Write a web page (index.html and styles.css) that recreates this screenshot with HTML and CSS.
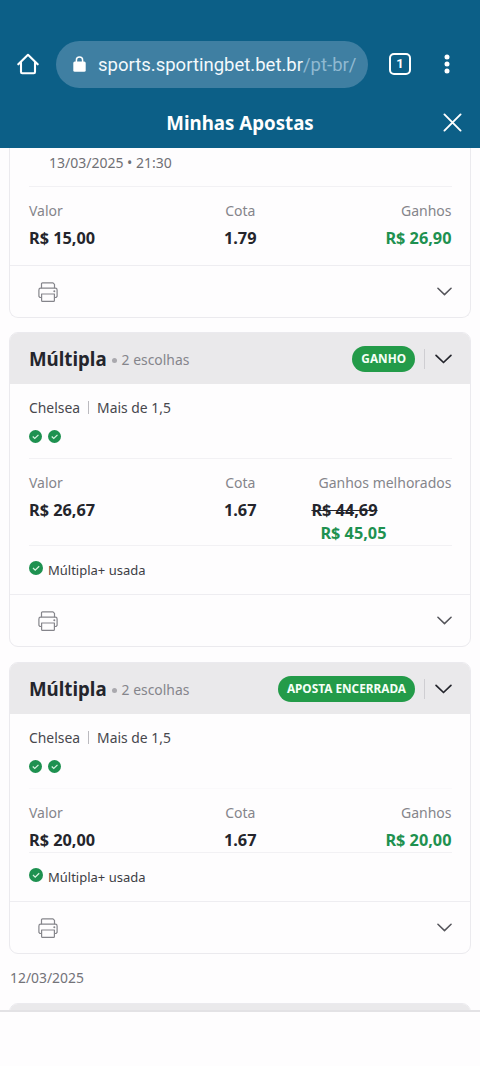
FILE: index.html
```html
<!DOCTYPE html>
<html lang="pt-BR">
<head>
<meta charset="utf-8">
<title>Minhas Apostas</title>
<link rel="stylesheet" href="styles.css">
</head>
<body>
<svg class="defs" width="0" height="0">
  <symbol id="printer" viewBox="0 0 20 20">
    <g fill="none" stroke="currentColor" stroke-width="1.2" stroke-linejoin="round">
      <path d="M3.5 6.2V1.8Q3.5.8 4.5.8H15l1.500 1.500V6.200"/>
      <path d="M3.600 15.500H2L.9 14.300V8Q.9 6.200 2.700 6.200H17.300Q19.100 6.200 19.100 8v6.300L18 15.500H16.400"/>
      <path d="M3.600 12H16.400V18.400Q16.400 19.300 15.500 19.300H4.500Q3.600 19.300 3.600 18.400Z"/>
    </g>
    <circle cx="16.300" cy="9.200" r="1" fill="currentColor"/>
  </symbol>
  <symbol id="chevron" viewBox="0 0 16 9">
    <path d="M1 1l7 6.800L15 1" fill="none" stroke="currentColor" stroke-width="1.600" stroke-linecap="round" stroke-linejoin="round"/>
  </symbol>
  <symbol id="check" viewBox="0 0 14 14">
    <circle cx="7" cy="7" r="7" fill="#1e9150"/>
    <path d="M4 7l2.200 2.100L10.200 5.200" fill="none" stroke="#d9f2e0" stroke-width="1.300"/>
  </symbol>
</svg>
<div class="screen">
  <div class="browser">
    <svg class="home" viewBox="0 0 22 22"><path d="M1.300 11.300L11 1.800l9.700 9.500M4 9.500V19Q4 20.200 5.200 20.200H16.800Q18 20.200 18 19V9.500" fill="none" stroke="#fff" stroke-width="2.100" stroke-linecap="round" stroke-linejoin="round"/></svg>
    <div class="address">
      <svg class="lock" viewBox="0 0 13 16"><rect x=".3" y="5.500" width="12.400" height="10.300" rx="1.500" fill="#fff"/><path d="M3.400 6V4Q3.400 1 6.500 1T9.600 4V6" fill="none" stroke="#fff" stroke-width="1.500"/></svg>
      <span class="url">sports.sportingbet.bet.br<span class="path">/pt-br/</span></span>
    </div>
    <div class="tabs">1</div>
    <svg class="more" viewBox="0 0 6 20"><g fill="#fff"><circle cx="3" cy="3" r="2.500"/><circle cx="3" cy="10" r="2.500"/><circle cx="3" cy="17" r="2.500"/></g></svg>
  </div>
  <header class="title-bar">
    <h1>Minhas Apostas</h1>
    <svg class="close" viewBox="0 0 20 20"><path d="M1.500 1.500l17 17M18.500 1.500l-17 17" stroke="#fff" stroke-width="2" stroke-linecap="round"/></svg>
  </header>
  <main class="list">
    <section class="card card-cut">
      <div class="event-date">13/03/2025 • 21:30</div>
      <div class="stats stats-roomy">
        <div class="stat"><span class="label">Valor</span><b>R$ 15,00</b></div>
        <div class="stat mid"><span class="label">Cota</span><b>1.79</b></div>
        <div class="stat end"><span class="label">Ganhos</span><b class="win">R$ 26,90</b></div>
      </div>
      <div class="foot"><svg class="printer"><use href="#printer"/></svg><svg class="chev"><use href="#chevron"/></svg></div>
    </section>

    <section class="card card-spaced">
      <div class="head">
        <h2>Múltipla</h2><i class="dot"></i><span class="count">2 escolhas</span>
        <span class="badge">GANHO</span><i class="bar"></i><svg class="chev dark"><use href="#chevron"/></svg>
      </div>
      <div class="picks">
        <div class="names">Chelsea<i class="sep"></i>Mais de 1,5</div>
        <div class="checks"><svg><use href="#check"/></svg><svg><use href="#check"/></svg></div>
      </div>
      <div class="stats">
        <div class="stat"><span class="label">Valor</span><b>R$ 26,67</b></div>
        <div class="stat mid"><span class="label">Cota</span><b>1.67</b></div>
        <div class="stat end"><span class="label">Ganhos melhorados</span><div class="boost"><b class="old">R$ 44,69</b><b class="win">R$ 45,05</b></div></div>
      </div>
      <div class="used"><svg><use href="#check"/></svg>Múltipla+ usada</div>
      <div class="foot"><svg class="printer"><use href="#printer"/></svg><svg class="chev"><use href="#chevron"/></svg></div>
    </section>

    <section class="card">
      <div class="head">
        <h2>Múltipla</h2><i class="dot"></i><span class="count">2 escolhas</span>
        <span class="badge">APOSTA ENCERRADA</span><i class="bar"></i><svg class="chev dark"><use href="#chevron"/></svg>
      </div>
      <div class="picks">
        <div class="names">Chelsea<i class="sep"></i>Mais de 1,5</div>
        <div class="checks"><svg><use href="#check"/></svg><svg><use href="#check"/></svg></div>
      </div>
      <div class="stats stats-faint">
        <div class="stat"><span class="label">Valor</span><b>R$ 20,00</b></div>
        <div class="stat mid"><span class="label">Cota</span><b>1.67</b></div>
        <div class="stat end"><span class="label">Ganhos</span><b class="win">R$ 20,00</b></div>
      </div>
      <div class="used"><svg><use href="#check"/></svg>Múltipla+ usada</div>
      <div class="foot"><svg class="printer"><use href="#printer"/></svg><svg class="chev"><use href="#chevron"/></svg></div>
    </section>

    <div class="day">12/03/2025</div>
    <section class="card card-next"><div class="head"></div></section>
  </main>
  <footer class="bottom"></footer>
</div>
</body>
</html>
```
FILE: styles.css
```css
* { box-sizing: border-box; }
body { margin: 0; background: #fefdfe; }
.defs { position: absolute; }
.screen {
  width: 480px; height: 1066px; overflow: hidden;
  display: flex; flex-direction: column;
  font-family: "Noto Sans", sans-serif; color: #24252c;
}
svg { display: block; flex: none; }

/* Browser toolbar */
.browser {
  height: 98px; flex: none; background: #0c5f87;
  display: flex; align-items: center; padding: 30px 0 0 17px;
}
.home { width: 22px; height: 22px; }
.address {
  width: 312px; height: 47px; margin-left: 17px; padding-left: 17px;
  border-radius: 24px; background: #3f7fa2;
  display: flex; align-items: center;
}
.lock { width: 13px; height: 16px; }
.url {
  margin: 2px 0 0 12px; font: 18.5px/24px Roboto, sans-serif;
  color: #f3f9fc; white-space: nowrap;
}
.path { color: #8fb9d1; }
.tabs {
  width: 22px; height: 22px; margin-left: 21px;
  border: 2px solid #fff; border-radius: 5px;
  font: 700 13px/18px Roboto, sans-serif; color: #fff; text-align: center;
}
.more { width: 6px; height: 20px; margin-left: 33px; }

.title-bar {
  height: 50px; flex: none; background: #0c5f87; color: #fff;
  display: flex; align-items: center; justify-content: flex-end;
  padding: 0 18px 1px 0;
}
.title-bar h1 { flex: 1; margin: 0 0 0 37px; text-align: center; font-size: 18.700px; line-height: 26px; }
.close { width: 19px; height: 19px; }

/* Bet cards */
.list { height: 864px; flex: none; overflow: hidden; padding: 0 9px; border-bottom: 2px solid #e3e2e5; }
.card {
  margin-bottom: 14px; border: 1px solid #ebeaee; border-radius: 9px;
  overflow: hidden; background: #fefdfe;
}
.card-cut { border-top: 0; border-radius: 0 0 9px 9px; }
.card-spaced { margin-bottom: 15px; }
.event-date {
  height: 38px; padding: 3px 0 0 39px;
  font-size: 14px; line-height: 24px; color: #707075;
}
.head {
  height: 51px; padding: 0 18px 0 19px; background: #eae9eb;
  display: flex; align-items: center;
}
.head h2 { margin: 0; font-size: 18.700px; line-height: 26px; }
.dot { width: 5px; height: 5px; margin: 4px 5px 0 5px; border-radius: 50%; background: #aaa9ae; }
.count { margin: 3px auto 0 0; font-size: 13.900px; line-height: 20px; color: #85858b; }
.badge {
  height: 26px; padding: 0 9px; border-radius: 13px; background: #239b49;
  color: #f5fff7; font-size: 11.800px; font-weight: 700; line-height: 25px;
}
.bar { width: 1px; height: 20px; margin: 0 10px 0 9px; background: #cfced2; }
.chev { width: 15px; height: 9px; color: #55555b; }
.chev.dark { width: 17px; height: 10px; color: #24252c; }

.picks { height: 74px; padding: 11px 19px 0; }
.names { display: flex; align-items: center; height: 24px; font-size: 13.900px; color: #47474d; }
.sep { width: 1px; height: 13px; margin: 0 8px; background: #bbbabf; }
.checks { display: flex; gap: 6px; margin-top: 11px; }
.checks svg { width: 13px; height: 13px; }

.stats {
  display: grid; grid-template-columns: 1fr 64px 1fr;
  margin: 0 18.500px 0 19px; padding-top: 12px;
  border-top: 1px solid #f2f1f4;
}
.stats-roomy { padding-bottom: 15px; }
.stats-faint { border-top-color: #faf9fb; }
.stat { display: flex; flex-direction: column; }
.mid { align-items: center; }
.end { align-items: flex-end; }
.label { height: 27px; font-size: 14px; line-height: 24px; color: #85858b; white-space: nowrap; }
.stat b { font-size: 16.300px; line-height: 24px; white-space: nowrap; }
.stat .win { color: #1e9150; }
.boost { display: flex; flex-direction: column; align-items: flex-end; margin-right: 65px; }
.boost .old { margin-right: 9px; text-decoration: line-through; }
.boost .win { line-height: 23px; }

.used {
  display: flex; align-items: center; gap: 5px; height: 49px;
  margin: 0 18px 0 19px; border-top: 1px solid #f2f1f4;
  font-size: 13px; color: #3d3e44;
}
.used svg { width: 14px; height: 14px; margin-bottom: 5px; }
.foot {
  height: 52px; padding: 0 18px 0 28px; border-top: 1px solid #eeedf1;
  display: flex; align-items: center; justify-content: space-between;
}
.printer { width: 20px; height: 20px; color: #85858b; }
.day { height: 35px; padding-left: 1px; font-size: 13.900px; line-height: 20px; color: #737379; }
.bottom { flex: 1; background: #fefdfe; }
```
